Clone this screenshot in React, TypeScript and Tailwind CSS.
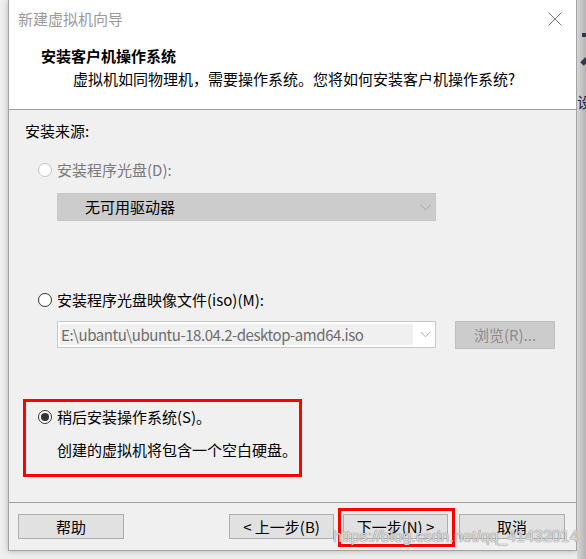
import React from "react";

const font = { fontFamily: '"Noto Sans CJK SC", "Noto Sans", sans-serif' };

function Radio({ state }: { state: "disabled" | "off" | "on" }) {
  const border =
    state === "disabled" ? "border-[#c4c4c4]" : "border-[#333333]";
  return (
    <span
      className={`w-[14px] h-[14px] rounded-full border ${border} bg-white flex items-center justify-center shrink-0`}
    >
      {state === "on" && (
        <span className="w-[8px] h-[8px] rounded-full bg-[#333333]" />
      )}
    </span>
  );
}

function Chevron({ color }: { color: string }) {
  return (
    <svg width="11" height="7" viewBox="0 0 11 7">
      <path d="M0.5 0.8 L5.5 5.8 L10.5 0.8" fill="none" stroke={color} strokeWidth="1" />
    </svg>
  );
}

function Btn({ label, w }: { label: string; w: string }) {
  return (
    <div
      className={`${w} h-[25px] bg-[#e1e1e1] border border-[#adadad] flex items-center justify-center text-[15px] text-black leading-none`}
    >
      {label}
    </div>
  );
}

export default function App() {
  return (
    <div
      className="w-[586px] h-[559px] bg-[#eeeeee] relative overflow-hidden flex"
      style={font}
    >
      <div className="w-[8px] h-full bg-[#efefef]" />
      <div className="w-[569px] h-[551px] border-l border-r border-b border-[#a3a3a3] bg-[#f0f0f0] flex flex-col shadow-[0_0_6px_rgba(0,0,0,0.25)] relative">
        {/* header */}
        <div className="h-[110px] bg-white border-b border-[#a0a0a0] pt-[9px] shrink-0">
          <div className="h-[20px] flex items-center justify-between pl-[9px] pr-[14px]">
            <span className="text-[15px] leading-[20px] text-[#9a9a9a]">
              新建虚拟机向导
            </span>
            <svg width="14" height="14" viewBox="0 0 14 14">
              <path d="M0.5 0.5 L13.5 13.5 M13.5 0.5 L0.5 13.5" stroke="#7a7a7a" strokeWidth="1" />
            </svg>
          </div>
          <div className="mt-[17px] h-[20px] pl-[32px] text-[15px] leading-[20px] font-bold text-black">
            安装客户机操作系统
          </div>
          <div className="mt-[3px] h-[20px] pl-[64px] text-[15px] leading-[20px] text-black">
            虚拟机如同物理机，需要操作系统。您将如何安装客户机操作系统?
          </div>
        </div>

        {/* content */}
        <div className="flex-1 flex flex-col text-[15px] leading-[20px]">
          <div className="mt-[11px] h-[20px] pl-[16px] text-black">安装来源:</div>

          <div className="mt-[19px] h-[20px] pl-[29px] flex items-center gap-[5px] text-[#7a7a7a]">
            <Radio state="disabled" />
            <span>安装程序光盘(D):</span>
          </div>

          <div className="mt-[13px] ml-[48px] w-[379px] h-[28px] bg-[#cccccc] border border-[#c6c6c6] flex items-center justify-between pl-[27px] pr-[4px] text-black">
            <span>无可用驱动器</span>
            <Chevron color="#a8a8a8" />
          </div>

          <div className="mt-[69px] h-[20px] pl-[29px] flex items-center gap-[5px] text-black">
            <Radio state="off" />
            <span>安装程序光盘映像文件(iso)(M):</span>
          </div>

          <div className="mt-[11px] h-[28px] flex items-start">
            <div className="ml-[48px] w-[379px] h-[27px] bg-white border border-[#c9c9c9] flex items-center pl-[2px] pr-[4px]">
              <div className="w-[353px] h-[21px] bg-[#f0f0f0] flex items-center pl-[1px] text-[#6d6d6d] tracking-[-0.45px] overflow-hidden whitespace-nowrap">
                E:\ubantu\ubuntu-18.04.2-desktop-amd64.iso
              </div>
              <div className="flex-1 flex justify-end">
                <Chevron color="#a8a8a8" />
              </div>
            </div>
            <div className="ml-[19px] w-[100px] h-[28px] bg-[#cccccc] border border-[#bfbfbf] flex items-center justify-center text-[#8c8c8c]">
              浏览(R)...
            </div>
          </div>

          <div className="mt-[50px] ml-[14px] w-[279px] h-[78px] border-[3px] border-[#ff0000] text-black">
            <div className="mt-[5px] h-[20px] pl-[12px] flex items-center gap-[5px]">
              <Radio state="on" />
              <span>稍后安装操作系统(S)。</span>
            </div>
            <div className="mt-[13px] h-[20px] pl-[31px]">
              创建的虚拟机将包含一个空白硬盘。
            </div>
          </div>
        </div>

        {/* footer */}
        <div className="h-[48px] border-t border-[#a0a0a0] pt-[11px] pl-[9px] pr-[11px] flex items-start shrink-0">
          <Btn label="帮助" w="w-[106px]" />
          <div className="flex-1" />
          <Btn label="< 上一步(B)" w="w-[105px]" />
          <div className="w-[9px]" />
          <Btn label="下一步(N) >" w="w-[105px]" />
          <div className="w-[11px]" />
          <Btn label="取消" w="w-[106px]" />
        </div>

        {/* red highlight around next button */}
        <div className="absolute left-[329px] top-[508px] w-[117px] h-[39px] border-[3px] border-[#ff0000] pointer-events-none" />
      </div>
      <div className="flex-1 h-full bg-gradient-to-r from-[#d6d6d6] to-[#b4b4b4] relative overflow-hidden">
        <div className="absolute left-[5px] top-[33px] w-[4px] h-[4px] bg-[#2d3b4e]" />
        <div className="absolute left-[5px] top-[58px] w-[5px] h-[7px] bg-[#2d3b4e] rotate-45" />
        <div className="absolute left-[0px] top-[92px] text-[15px] leading-[20px] text-[#1a2a44]">设</div>
      </div>

      {/* watermark */}
      <div
        className="absolute left-[333px] top-[527px] text-[16px] leading-[20px] text-[rgba(235,235,235,0.85)] whitespace-nowrap pointer-events-none"
        style={{ fontFamily: '"Liberation Sans", sans-serif', textShadow: "0 0 1px rgba(110,110,110,0.8), 0 0 1px rgba(110,110,110,0.6)" }}
      >
        https://blog.csdn.net/qq_41432014
      </div>
    </div>
  );
}
